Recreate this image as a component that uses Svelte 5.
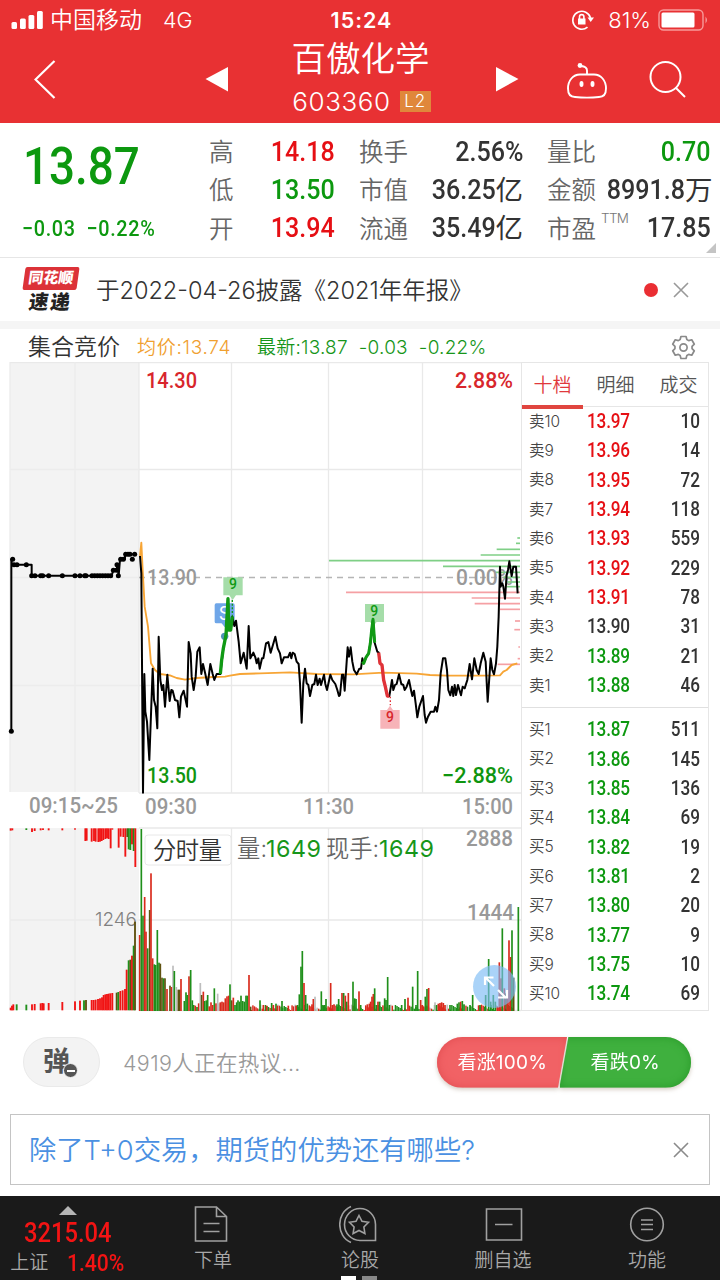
<script lang="ts">
  type Tone = 'up' | 'down' | 'flat';

  const stats: { label: string; sup?: string; num: string; unit?: string; tone: Tone }[][] = [
    [
      { label: '高', num: '14.18', tone: 'up' },
      { label: '低', num: '13.50', tone: 'down' },
      { label: '开', num: '13.94', tone: 'up' }
    ],
    [
      { label: '换手', num: '2.56%', tone: 'flat' },
      { label: '市值', num: '36.25', unit: '亿', tone: 'flat' },
      { label: '流通', num: '35.49', unit: '亿', tone: 'flat' }
    ],
    [
      { label: '量比', num: '0.70', tone: 'down' },
      { label: '金额', num: '8991.8', unit: '万', tone: 'flat' },
      { label: '市盈', sup: 'TTM', num: '17.85', tone: 'flat' }
    ]
  ];

  const prevClose = 13.9;
  const toneOf = (price: string): Tone =>
    +price > prevClose ? 'up' : +price < prevClose ? 'down' : 'flat';

  const book = [
    [
      ['卖10', '13.97', '10'],
      ['卖9', '13.96', '14'],
      ['卖8', '13.95', '72'],
      ['卖7', '13.94', '118'],
      ['卖6', '13.93', '559'],
      ['卖5', '13.92', '229'],
      ['卖4', '13.91', '78'],
      ['卖3', '13.90', '31'],
      ['卖2', '13.89', '21'],
      ['卖1', '13.88', '46']
    ],
    [
      ['买1', '13.87', '511'],
      ['买2', '13.86', '145'],
      ['买3', '13.85', '136'],
      ['买4', '13.84', '69'],
      ['买5', '13.82', '19'],
      ['买6', '13.81', '2'],
      ['买7', '13.80', '20'],
      ['买8', '13.77', '9'],
      ['买9', '13.75', '10'],
      ['买10', '13.74', '69']
    ]
  ];

  // Axis labels: text, x, baseline, width, colour
  const axis: [string, number, number, number, string][] = [
    ['14.30', 146, 388, 51, '#d8262c'],
    ['2.88%', 455, 388, 58, '#d8262c'],
    ['13.90', 147, 585, 50, '#999'],
    ['0.00%', 456, 585, 57, '#999'],
    ['13.50', 147, 783, 50, '#0f950f'],
    ['−2.88%', 442, 783, 71, '#0f950f'],
    ['09:15~25', 29, 813, 89, '#999'],
    ['09:30', 145, 814, 52, '#999'],
    ['11:30', 303, 814, 51, '#999'],
    ['15:00', 462, 814, 51, '#999'],
    ['2888', 466, 846, 47, '#999'],
    ['1444', 467, 920, 47, '#999']
  ];

  // Price series, in thirds of a pixel measured from the top of the plot group
  const price =
    '420,108 424,160 429,818 433,462 436,575 441,605 448,720 458,446 462,540 467,560 472,625 476,350 481,480 486,510 490,495 495,560 502,464 509,543 514,510 518,512 525,540 533,543 538,592 543,530 551,512 561,560 566,366 572,400 575,470 581,510 587,470 592,395 599,382 604,462 609,432 616,462 623,495 631,432 638,462 643,480 650,462 661,462 670,385 678,345 684,236 686,330 692,330 697,290 703,318 708,302 716,365 722,430 731,398 740,446 746,318 751,415 760,398 766,412 770,430 775,415 779,446 786,415 790,415 798,370 805,366 812,398 826,350 833,385 840,400 845,430 852,412 864,412 870,398 874,415 878,398 884,402 890,425 896,432 900,490 905,608 910,490 915,446 920,490 925,495 930,528 937,495 943,492 948,464 953,495 959,476 963,495 972,464 976,492 981,510 991,464 997,480 1006,492 1012,510 1017,528 1020,525 1026,464 1030,464 1034,512 1043,382 1047,410 1052,382 1057,425 1062,450 1070,463 1078,446 1083,446 1087,415 1091,430 1098,412 1106,400 1111,370 1115,330 1119,298 1122,340 1124,368 1132,395 1136,398 1140,430 1146,435 1151,480 1156,500 1162,528 1168,528 1176,480 1180,510 1185,495 1190,492 1197,463 1204,492 1210,495 1214,510 1220,500 1227,480 1233,510 1237,528 1242,512 1247,550 1252,592 1258,560 1269,528 1274,585 1278,608 1284,590 1292,575 1302,575 1306,560 1311,575 1317,540 1322,460 1329,415 1336,415 1341,450 1345,510 1351,526 1356,500 1360,528 1364,495 1368,525 1374,495 1383,526 1388,500 1394,505 1402,480 1409,432 1416,478 1423,415 1430,450 1436,462 1442,430 1450,398 1457,425 1463,545 1472,415 1477,450 1482,463 1488,430 1492,380 1496,290 1500,140 1502,200 1507,190 1510,200 1515,236 1520,165 1524,150 1528,124 1535,168 1540,140 1548,140 1553,220';
  const average =
    '420,108 424,68 428,150 434,260 444,320 453,430 465,450 480,462 510,466 530,474 555,479 590,474 640,471 675,470 690,467 720,462 780,460 870,457 950,462 1060,463 1110,460 1150,458 1250,461 1290,465 1340,467 1440,467 1500,466 1510,455 1520,450 1535,435 1552,430';
  const auction =
    '34,634 34,118 36,134 95,134 95,167 335,167 340,150 350,150 352,134 356,167 360,118 375,118 375,103 406,103';
  const auctionDots = [
    [34, 634], [38, 118], [42, 134], [51, 134], [79, 134], [95, 167], [105, 167], [122, 167], [128, 167], [146, 167],
    [187, 167], [225, 167], [240, 167], [254, 167], [258, 167], [276, 167], [284, 167], [292, 167], [300, 167],
    [308, 167], [316, 167], [324, 167], [332, 167], [340, 151], [349, 151], [351, 134], [355, 167], [362, 118],
    [370, 118], [377, 103], [384, 103], [390, 103], [397, 118], [404, 103]
  ];

  // Resting orders per price level: [y, left edge]
  const asks = [[54, 1552], [70, 1548], [88, 1490], [105, 1442], [122, 987], [139, 1329], [157, 1488], [172, 1510], [186, 1522], [200, 1520]];
  const bids = [[217, 1038], [234, 1415], [251, 1424], [268, 1500], [303, 1545], [329, 1543], [381, 1555], [416, 1553], [433, 1493]];

  // Minute volumes: x, top, colour key
  const fill: Record<string, string> = { r: '#d92a1c', g: '#1f8f1a', d: '#5f5210', k: '#bdbdbd' };
  const peaks =
    '419:360r 424:42g 429:302g 434:246r 438:350r 443:400g 449:285d 453:175r 458:430r 463:448g 467:450g 472:345g 477:443g 481:446d 486:488d 491:490g 495:490d 501:522r 510:512d 515:516r 519:452k 523:468g 529:516k 535:524d 539:524d 543:492r 553:558g 558:532g 562:540g 567:484r 572:465g 577:556g 581:570g 586:572r 591:576g 596:565r 601:504k 605:540d 610:530r 614:558g 619:556g 623:540g 628:574r 633:562r 638:570r 643:520g 648:565r 653:536k 657:565k 661:562r 666:560r 671:562r 676:550r 681:544r 686:542r 690:508g 695:556d 700:548r 705:570g 710:562g 714:556g 719:560g 723:542g 728:558g 733:560g 738:542g 742:542g 747:480r 752:575d 780:556g 790:570r 800:572r 815:564g 820:570r 828:566g 832:572r 846:558g 865:572r 888:572r 893:570g 898:538g 903:455g 907:408g 912:504r 917:540g 922:566g 936:568r 940:552r 945:545k 964:529g 969:570g 974:570g 978:552g 992:504r 997:570r 1002:568r 1011:568g 1016:552g 1026:534r 1031:534g 1036:542r 1040:560g 1045:534r 1059:500g 1064:550g 1068:552g 1077:529r 1082:570g 1102:568r 1108:566r 1112:560r 1116:545r 1120:537r 1124:520g 1129:570g 1134:560r 1139:560g 1154:550g 1158:555g 1163:486g 1168:570g 1205:570g 1215:552g 1224:548r 1238:515g 1248:570g 1253:468g 1262:555r 1267:570r 1276:545g 1281:522g 1286:519r 1305:562k 1310:570g 1315:566r 1320:564r 1325:562r 1330:564r 1335:570r 1350:570g 1372:566g 1377:562g 1382:560r 1387:558g 1392:568g 1410:570g 1418:540g 1440:570g 1457:540g 1466:432g 1472:560g 1480:540g 1486:560g 1498:442r 1503:490r 1507:340g 1513:520r 1518:535d 1522:530r 1527:376r 1532:426r 1536:346g 1541:488d 1555:276g';
  const matchedBars =
    '32:578r 36:572r 40:568r 50:568g 79:569g 96:568r 104:567r 122:565r 127:564r 131:565r 146:564r 187:561r 225:559r 240:557r 252:556g 258:555d 275:555r 281:555r 287:554r 294:552r 300:550r 306:547r 311:540r 316:538r 321:537r 326:536r 331:535r 337:534r 350:533d 355:531g 361:528r 368:526r 375:522r 380:464r 386:436g 391:434d 396:422r 401:392g 405:320d';
  const unmatchedBars =
    '32:47r 37:46r 79:45g 96:51r 104:48r 122:46r 129:45r 146:46r 187:46r 225:44r 256:78r 260:77r 275:80r 282:78r 287:80r 295:81r 300:80r 305:78r 310:75r 316:72r 321:70r 326:72r 332:100r 337:44r 356:98r 362:65r 370:66r 376:125r 382:66d 386:103g 391:105g 396:88r 401:108g 406:156r';

  const parseBars = (list: string, red = fill.r) =>
    list.split(' ').map((p) => {
      const [x, rest] = p.split(':');
      const key = rest.slice(-1);
      return { x: +x, y: parseInt(rest), color: key === 'r' ? red : fill[key] };
    });

  const volumes = parseBars(peaks);
  const matched = parseBars(matchedBars, '#f01414');
  const unmatched = parseBars(unmatchedBars, '#f01414');
  const minor = Array.from({ length: 168 }, (_, i) => ({
    x: 754 + i * 4.7,
    y: 585 - ((i * 37 + (i % 7) * 11) % 17),
    color: fill['rgrrgkrgg'[(i * 5 + (i % 4)) % 9]]
  })).filter((b) => b.x < 1548);

  const gear = Array.from({ length: 6 }, (_, k) =>
    [[-23, 8.6], [-13, 11.3], [13, 11.3], [23, 8.6]].map(([off, r]) => {
      const a = ((k * 60 - 90 + off) * Math.PI) / 180;
      return `${(12.5 + r * Math.cos(a)).toFixed(2)},${(12.5 + r * Math.sin(a)).toFixed(2)}`;
    }).join(' ')
  ).join(' ');
</script>

<div class="screen">
  <header>
    <div class="status">
      <div class="carrier">
        <svg width="33" height="20" viewBox="0 0 33 20" fill="#fff">
          <rect x="0.5" y="12" width="5.5" height="7" rx="1.5" />
          <rect x="9" y="8.5" width="5.8" height="10.5" rx="1.5" />
          <rect x="17.5" y="5" width="5.8" height="14" rx="1.5" />
          <rect x="26" y="1" width="5.8" height="18" rx="1.5" />
        </svg>
        <span class="operator">中国移动</span>
        <span>4G</span>
      </div>
      <div class="clock">15:24</div>
      <div class="power">
        <svg width="24" height="22" viewBox="0 0 24 22" fill="none" stroke="#fff" stroke-width="1.6">
          <path d="M16.5 18.2A9 9 0 1 1 19.5 9" />
          <path d="M16.5 8.500h6.500l-3.300 4.500z" fill="#fff" stroke="none" />
          <rect x="7" y="9.5" width="7.5" height="6" fill="#fff" stroke="none" />
          <path d="M8.500 10V7.800a2.200 2.200 0 0 1 4.400 0V10" />
        </svg>
        <span class="pct">81%</span>
        <svg width="51" height="22" viewBox="0 0 51 22">
          <rect x="1" y="1" width="44" height="20" rx="4.5" fill="none" stroke="#f79a9a" stroke-width="1.4" />
          <rect x="3.5" y="3.5" width="33" height="15" rx="1.5" fill="#fff" />
          <path d="M47.500 7.500q3 3.500 0 7z" fill="#f79a9a" />
        </svg>
      </div>
    </div>
    <nav>
      <svg class="back" width="22" height="40" viewBox="0 0 22 40" fill="none" stroke="#fff" stroke-width="2.2">
        <path d="M20.500 2L1.500 20.500L20.500 39" />
      </svg>
      <svg width="24" height="26" viewBox="0 0 24 26" fill="#fff"><path d="M0.500 13L23 1V25.500z" /></svg>
      <div class="title">
        <h1>百傲化学</h1>
        <div class="code">603360<span class="level">L2</span></div>
      </div>
      <svg width="24" height="26" viewBox="0 0 24 26" fill="#fff"><path d="M23.500 13L1 1V25.500z" /></svg>
      <svg class="robot" width="42" height="38" viewBox="0 0 42 38" fill="none" stroke="#fff" stroke-width="1.9">
        <path d="M13 12.500h14c7 0 12 6 12 14 0 6-2 8.500-7 8.500-8 .8-16 .8-24 0-5 0-7-2.500-7-8.500 0-8 5-14 12-14z" />
        <path d="M20 12.500V8.500q0-4-6-4.500" />
        <circle cx="13" cy="3.5" r="2.4" fill="#fff" stroke="none" />
        <ellipse cx="14.5" cy="22" rx="2" ry="2.9" fill="#fff" stroke="none" />
        <ellipse cx="25.5" cy="22" rx="2" ry="2.9" fill="#fff" stroke="none" />
      </svg>
      <svg class="search" width="38" height="38" viewBox="0 0 38 38" fill="none" stroke="#fff" stroke-width="2">
        <circle cx="16.5" cy="17" r="15" />
        <path d="M26.500 27.500L36 37" />
      </svg>
    </nav>
  </header>

  <section class="quote">
    <div class="last">
      <div class="last-price"><span class="din">13.87</span></div>
      <div class="change"><span class="din">−0.03&ensp;−0.22%</span></div>
    </div>
    {#each stats as column}
      <div class="stat-col">
        {#each column as s}
          <div class="stat">
            <span class="label">{s.label}{#if s.sup}<sup>{s.sup}</sup>{/if}</span>
            <span class="value {s.tone}"><span class="din">{s.num}</span>{#if s.unit}<span class="unit">{s.unit}</span>{/if}</span>
          </div>
        {/each}
      </div>
    {/each}
    <i class="corner"></i>
  </section>

  <section class="news">
    <div class="badge">
      <div class="badge-top">同花顺</div>
      <div class="badge-bottom">速递</div>
    </div>
    <p>于2022-04-26披露《2021年年报》</p>
    <i class="dot"></i>
    <svg width="16" height="16" viewBox="0 0 16 16" stroke="#999" stroke-width="1.6"><path d="M1 1L15 15M15 1L1 15" /></svg>
  </section>

  <div class="legend">
    <span class="phase">集合竞价</span>
    <span class="avg">均价:13.74</span>
    <span class="latest">最新:13.87&nbsp; -0.03&nbsp; -0.22%</span>
    <svg width="25" height="25" viewBox="0 0 25 25" fill="none" stroke="#8a8a8a" stroke-width="1.7" stroke-linejoin="round">
      <polygon points={gear} />
      <circle cx="12.5" cy="12.5" r="3.6" />
    </svg>
  </div>

  <section class="market">
    <svg class="chart" width="521" height="655" viewBox="0 362 521 655">
      <rect x="10" y="362" width="129" height="430" fill="#f3f3f3" />
      <rect x="10" y="828" width="129" height="182" fill="#f3f3f3" />
      <g stroke="#e9e9e9" stroke-width="1.3">
        <path d="M10 362.500H521M139 469.500H521M139 685.500H521M139 793H521M139 828H521M139 920H521M139 1010.500H521" />
        <path d="M231.500 362V793M328.500 362V793M422.500 362V793M231.500 828V1010M328.500 828V1010M422.500 828V1010" />
        <path d="M139 362V793" />
        <path d="M75 362V792M10 469.500H139M10 577.500H139M10 685.500H139M75 828V1010M10 920H139M10 362V792M10 828V1010" stroke="#ececec" />
      </g>
      <path d="M139 577.500H519" stroke="#b5b5b5" stroke-width="1.4" stroke-dasharray="6 5" />

      <g class="num" font-size="22.5">
        {#each axis as [label, x, y, width, color]}
          <text {x} {y} textLength={width} lengthAdjust="spacingAndGlyphs" fill={color}>{label}</text>
        {/each}
      </g>

      <g transform="translate(0 520) scale(0.33333)" fill="none" stroke-linejoin="round">
        {#each asks as [y, x]}
          <path d="M{x} {y}H1560" stroke="#7fcf86" stroke-width="5" />
        {/each}
        {#each bids as [y, x]}
          <path d="M{x} {y}H1560" stroke="#f5a0a4" stroke-width="5" />
        {/each}
        <rect x="644" y="250" width="60" height="60" rx="5" fill="#6fa6e8" />
        <path d="M664 308h20l-10 14z" fill="#6fa6e8" />
        <circle cx="674" cy="349" r="11" fill="#4f93b5" />
        <text class="sell" x="656" y="299" font-size="54" fill="#fff">S</text>
        <path d="M670 172h58v54h-20l-10 14l-10-14h-18z" fill="#a5dda9" />
        <path d="M315 252h57v54h-22l-10 12l-10-12h-15z" transform="translate(780 0)" fill="#a5dda9" />
        <path d="M361 570h20l9-13l9 13h20v56h-58z" transform="translate(780 0)" fill="#f7b3b8" />
        <polyline points={average} stroke="#f7a535" stroke-width="5.5" />
        <polyline points={price} stroke="#000" stroke-width="6" />
        <polyline points="661,462 665,420 670,385 678,345 684,236 686,330 692,330 697,290" stroke="#109a14" stroke-width="10" />
        <polyline points="1087,425 1091,430 1098,412 1106,400 1111,370 1115,330 1119,298 1122,340 1124,368" stroke="#109a14" stroke-width="9" />
        <polyline points="1136,398 1140,430 1146,435 1151,480 1156,500 1162,528 1168,528" stroke="#e03238" stroke-width="10" />
        <path d="M697 240V290" stroke="#109a14" stroke-width="4" stroke-dasharray="6 5" />
        <path d="M1171 530V556" stroke="#e03238" stroke-width="4" stroke-dasharray="5 6" />
        <polyline points={auction} stroke="#000" stroke-width="6" />
        {#each auctionDots as [x, y]}
          <circle cx={x} cy={y} r="7.5" fill="#000" />
        {/each}
        <g class="num" font-size="42">
          <text x="687" y="207" fill="#109a14">9</text>
          <text x="1111" y="287" fill="#109a14">9</text>
          <text x="1158" y="606" fill="#d8262c">9</text>
        </g>
      </g>

      <text class="plain" x="95" y="926" font-size="18.5" textLength="42" lengthAdjust="spacingAndGlyphs" fill="#808080">1246</text>
      <g transform="translate(0 815) scale(0.33333)">
        {#each unmatched as b}
          <rect x={b.x - 2.8} y="40" width="5.6" height={b.y - 40} fill={b.color} />
        {/each}
        {#each matched as b}
          <rect x={b.x - 2.8} y={b.y} width="5.6" height={586 - b.y} fill={b.color} />
        {/each}
        {#each minor as b}
          <rect x={b.x - 2.2} y={b.y} width="4.4" height={588 - b.y} fill={b.color} />
        {/each}
        {#each volumes as b}
          <rect x={b.x - 2.5} y={b.y} width="5" height={588 - b.y} fill={b.color} />
        {/each}
      </g>

      <rect x="145" y="835" width="86" height="30" rx="3" fill="#fff" stroke="#e8e8e8" />
      <g class="plain" font-size="23.3">
        <text x="153" y="859" textLength="69" fill="#333">分时量</text>
        <text x="237" y="857" textLength="30" fill="#666">量:</text>
        <text class="qty-now" x="266" y="857" textLength="55" fill="#17961a">1649</text>
        <text x="326" y="857" textLength="53" fill="#666">现手:</text>
        <text class="qty-now" x="379" y="857" textLength="55" fill="#17961a">1649</text>
      </g>
      <circle cx="494.5" cy="986.5" r="21.5" fill="#7cbcf5" fill-opacity="0.65" />
      <path d="M486 978l8 8M485 985v-7.500h8.500M498 990l8 8M507 990v7.500h-9" stroke="#fff" stroke-width="2.2" fill="none" />
    </svg>

    <div class="book">
      <div class="tabs">
        <span class="active">十档</span>
        <span>明细</span>
        <span>成交</span>
      </div>
      {#each book as side}
        <div class="side">
          {#each side as [name, level, qty]}
            <div class="level-row">
              <span class="name">{name}</span>
              <span class="din price {toneOf(level)}">{level}</span>
              <span class="din qty">{qty}</span>
            </div>
          {/each}
        </div>
      {/each}
    </div>
  </section>

  <section class="talk">
    <div class="danmu">
      <span>弹</span>
      <i></i>
    </div>
    <p>4919人正在热议...</p>
    <div class="vote">
      <div class="bull">看涨100%</div>
      <div class="bear">看跌0%</div>
    </div>
  </section>

  <section class="promo">
    <p>除了T+0交易，期货的优势还有哪些?</p>
    <svg width="16" height="16" viewBox="0 0 16 16" stroke="#8a8a8a" stroke-width="1.6"><path d="M1 1L15 15M15 1L1 15" /></svg>
  </section>

  <footer>
    <div class="index">
      <i class="caret"></i>
      <div class="points"><span class="din">3215.04</span></div>
      <div class="index-row"><span>上证</span><span class="din rate">1.40%</span></div>
    </div>
    <div class="tab">
      <svg width="38" height="40" viewBox="0 0 38 40">
        <path d="M1.500 3h21l10 9.500V37H1.500zM22.500 3v9.500h10M9.500 19.500h16M9.500 27.500h16" />
      </svg>
      <span>下单</span>
    </div>
    <div class="tab">
      <svg width="42" height="40" viewBox="0 0 42 40">
        <path d="M12 2.500C-3 9-3 32 12 38.500" />
        <path d="M21 4.500a15.500 16 0 0 1 15.500 16V36.500H21a15.500 16 0 0 1 0-32z" />
        <path d="M20 11.500l3 5.800 6.500 1-4.600 4.700 1 6.500-5.900-3-5.900 3 1-6.500-4.600-4.700 6.500-1z" />
      </svg>
      <span>论股</span>
    </div>
    <div class="tab">
      <svg width="40" height="40" viewBox="0 0 40 40">
        <path d="M3.500 5h35v31h-35zM12 20.500h17.500" />
      </svg>
      <span>删自选</span>
    </div>
    <div class="tab">
      <svg width="40" height="40" viewBox="0 0 40 40">
        <circle cx="20" cy="20.5" r="16.3" />
        <path d="M14 16h12M14 20.500h12M14 25.500h12" />
      </svg>
      <span>功能</span>
    </div>
    <div class="pager"><i class="on"></i><i></i></div>
  </footer>
</div>

<style>
  :global(body) {
    background: #fff;
  }

  .screen {
    width: 720px;
    height: 1280px;
    overflow: hidden;
    display: flex;
    flex-direction: column;
    font-family: Inter, 'Noto Sans CJK SC', sans-serif;
    font-weight: 350;
    color: #333;
    white-space: nowrap;
  }

  .screen > * {
    box-sizing: border-box;
    flex: none;
  }

  svg {
    display: block;
    flex: none;
  }

  p,
  h1 {
    margin: 0;
    font-weight: inherit;
  }

  .din {
    display: inline-block;
    font-family: Roboto, sans-serif;
    font-weight: 500;
    transform: scaleX(0.88);
    transform-origin: right center;
  }

  .num {
    font-family: Roboto, sans-serif;
    font-weight: 500;
  }

  .up {
    color: #e60f14;
  }

  .down {
    color: #0c980f;
  }

  .flat {
    color: #333;
  }

  header {
    height: 123px;
    background: #e83133;
    color: #fff;
  }

  .status {
    display: grid;
    grid-template-columns: 1fr auto 1fr;
    align-items: center;
    height: 40px;
    padding: 0 11px;
    font-size: 21.5px;
  }

  .carrier,
  .power {
    display: flex;
    align-items: center;
    line-height: 30px;
  }

  .operator {
    font-size: 23px;
    margin: -1px 21px 0 6px;
  }

  .clock {
    font-size: 21.5px;
    font-weight: 600;
    letter-spacing: 1px;
    margin-left: 3px;
  }

  .power {
    justify-content: flex-end;
  }

  .pct {
    font-size: 22px;
    margin: 0 7px 0 13px;
  }

  nav {
    display: flex;
    align-items: center;
    height: 78px;
    padding-left: 34px;
  }

  .back {
    margin-right: 149px;
  }

  .title {
    width: 266px;
    text-align: center;
  }

  h1 {
    font-size: 34.5px;
    line-height: 42px;
    margin: 0 0 0 -3px;
  }

  .code {
    display: flex;
    justify-content: center;
    align-items: center;
    font-size: 26px;
    line-height: 38px;
    letter-spacing: 0.6px;
    margin: 3px 0 0 -1px;
  }

  .level {
    margin-left: 9px;
    width: 31px;
    height: 21px;
    background: #e0873b;
    font-size: 17px;
    line-height: 21px;
    letter-spacing: 1px;
  }

  .robot {
    margin: 3px 0 0 48px;
  }

  .search {
    margin-left: 40px;
  }

  .quote {
    height: 135px;
    position: relative;
    display: grid;
    grid-template-columns: 185px 150px 188px 188px;
    border-bottom: 1px solid #e6e6e6;
    padding-top: 9.5px;
  }

  .stat-col {
    padding-left: 24px;
  }

  .last .din {
    transform-origin: left center;
  }

  .last-price {
    padding: 1px 0 0 23px;
    font-size: 52px;
    line-height: 64px;
    color: #0c980f;
  }

  .change {
    padding: 15px 0 0 22px;
    font-size: 22.5px;
    line-height: 28px;
    letter-spacing: 0.75px;
    color: #0c980f;
  }

  .stat {
    display: flex;
    justify-content: space-between;
    align-items: center;
    height: 38.3px;
  }

  .label {
    font-size: 24.5px;
    line-height: 36px;
    margin-top: 1px;
    color: #666;
  }

  .label sup {
    font-size: 13.5px;
    line-height: 0;
    vertical-align: 15px;
    margin-left: 5px;
    letter-spacing: -0.7px;
    color: #777;
  }

  .value {
    display: flex;
    align-items: center;
    font-size: 28.5px;
    line-height: 38px;
  }

  .unit {
    font-size: 27.5px;
    font-weight: 400;
  }

  .corner {
    position: absolute;
    right: 4px;
    bottom: 4px;
    border-left: 10px solid transparent;
    border-bottom: 10px solid #c4c4c4;
  }

  .news {
    height: 71px;
    display: flex;
    align-items: center;
    padding: 0 31px 0 23px;
    border-bottom: 8px solid #f5f5f5;
  }

  .badge {
    width: 57px;
    margin: 2px 17px 0 0;
    font-weight: 900;
  }

  .badge-top {
    width: 54px;
    height: 23px;
    margin-left: 1px;
    border-radius: 2px;
    background: #dc3238;
    color: #fff;
    font-size: 15px;
    line-height: 22px;
    text-align: center;
    transform: skewX(-8deg);
  }

  .badge-bottom {
    padding-left: 6px;
    font-size: 19.5px;
    line-height: 25px;
    letter-spacing: 2px;
    color: #222;
    transform: skewX(-8deg);
  }

  .news p {
    flex: 1;
    font-size: 23.5px;
    margin: -1px 0 0 -1px;
  }

  .dot {
    width: 14px;
    height: 14px;
    border-radius: 50%;
    background: #ea2e33;
    margin-right: 15px;
  }

  .legend {
    height: 33px;
    display: flex;
    align-items: center;
    padding: 3px 24px 0 28px;
    font-size: 19px;
    line-height: 28px;
  }

  .phase {
    width: 109px;
    font-size: 23px;
  }

  .avg,
  .latest {
    margin-top: 2px;
    letter-spacing: 0.2px;
  }

  .avg {
    width: 120px;
    letter-spacing: 0.7px;
    color: #f0a030;
  }

  .latest {
    flex: 1;
    color: #17961a;
  }

  .market {
    height: 655px;
    display: flex;
  }

  .plain,
  .sell {
    font-family: Inter, 'Noto Sans CJK SC', sans-serif;
  }

  .sell,
  .qty-now {
    font-weight: 400;
  }

  .book {
    box-sizing: border-box;
    width: 188px;
    height: 649px;
    border: 1px solid #e6e6e6;
  }

  .tabs {
    display: grid;
    grid-template-columns: 61px 65px 61px;
    height: 43px;
    border-bottom: 1px solid #e6e6e6;
    font-size: 19px;
    line-height: 45px;
    text-align: center;
    color: #555;
  }

  .tabs .active {
    color: #e0393c;
    box-sizing: border-box;
    height: 46px;
    border-bottom: 4px solid #e0453f;
  }

  .side + .side {
    border-top: 1px solid #e0e0e0;
    margin-top: 7px;
    padding-top: 7px;
  }

  .level-row {
    display: grid;
    grid-template-columns: 58px 55px 1fr;
    align-items: center;
    height: 29.33px;
    padding: 0 8px 0 7px;
  }

  .name {
    font-size: 15.5px;
    line-height: 22px;
    color: #444;
  }

  .price {
    font-size: 19.5px;
    letter-spacing: -0.2px;
    transform-origin: left center;
  }

  .qty {
    font-size: 19.5px;
    text-align: right;
  }

  .talk {
    height: 97px;
    display: flex;
    align-items: center;
    padding: 0 29px 7px 23px;
  }

  .danmu {
    position: relative;
    box-sizing: border-box;
    width: 77px;
    height: 50px;
    border: 1px solid #eaeaea;
    border-radius: 25px;
    background: #f3f3f3;
    color: #555;
    font-size: 27px;
    font-weight: 700;
    line-height: 48px;
    padding-left: 19px;
    margin-right: 23px;
  }

  .danmu i {
    position: absolute;
    left: 39px;
    top: 25px;
    width: 13px;
    height: 13px;
    border: 1px solid #f3f3f3;
    border-radius: 50%;
    background: linear-gradient(#fff, #fff) center / 8px 2px no-repeat #555;
  }

  .talk p {
    flex: 1;
    font-size: 21.5px;
    letter-spacing: 0.35px;
    margin-top: -2px;
    color: #999;
  }

  .vote {
    display: flex;
    width: 254px;
    height: 51px;
    color: #fff;
    font-size: 19px;
    font-weight: 400;
    line-height: 51px;
    letter-spacing: 0.2px;
    text-align: center;
    filter: drop-shadow(0 2px 2px rgba(120, 90, 60, 0.3));
  }

  .bull {
    width: 131px;
    border-radius: 26px 0 0 26px;
    background: #f16265;
    box-shadow: inset 0 0 8px #e14c50;
    clip-path: polygon(0 0, 130px 0, 121px 100%, 0 100%);
  }

  .bear {
    width: 132px;
    margin-left: -8px;
    border-radius: 0 26px 26px 0;
    background: #3fb03e;
    box-shadow: inset 0 0 8px #299a29;
    clip-path: polygon(9px 0, 100% 0, 100% 100%, 0 100%);
  }

  .promo {
    height: 71px;
    margin: 0 10px 11px;
    border: 1px solid #c4c4c4;
    display: flex;
    align-items: center;
    justify-content: space-between;
    padding: 0 20px 0 18px;
    font-size: 27.3px;
    color: #4a90e2;
  }

  .promo p {
    margin-top: -3px;
  }

  footer {
    position: relative;
    height: 84px;
    display: grid;
    grid-template-columns: 140px 146px 148px 138px 150px;
    background: #1a1a1a;
    color: #a8a8a8;
  }

  .index {
    display: flex;
    flex-direction: column;
    align-items: center;
    width: 136px;
    padding-top: 10px;
  }

  .caret {
    border: 9px solid transparent;
    border-top: 0;
    border-bottom: 9px solid #b5b5b5;
  }

  .index .din {
    color: #f31414;
    transform-origin: center;
  }

  .points {
    font-size: 27px;
    line-height: 32px;
    margin-top: 2px;
  }

  .index-row {
    display: flex;
    align-items: center;
    gap: 15px;
    margin: 2px 0 0 3px;
    font-size: 19px;
    line-height: 24px;
  }

  .rate {
    font-size: 24px;
  }

  .tab {
    display: flex;
    flex-direction: column;
    align-items: center;
    padding-top: 8px;
    font-size: 19px;
    line-height: 33px;
  }

  .tab svg {
    fill: none;
    stroke: #a0a0a0;
    stroke-width: 1.6;
  }

  .pager {
    position: absolute;
    left: 341px;
    bottom: 0;
    display: flex;
    gap: 6px;
  }

  .pager i {
    width: 15px;
    height: 4px;
    background: #888;
  }

  .pager .on {
    background: #fff;
  }
</style>
